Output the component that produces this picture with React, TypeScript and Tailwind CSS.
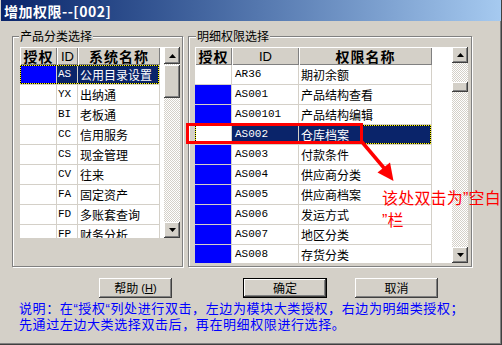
import React from "react";

const CJK = "font-['Noto_Sans_CJK_SC',sans-serif]";
const MONO = "font-['Liberation_Mono','DejaVu_Sans_Mono',monospace]";
const LAT = "font-['Liberation_Sans',sans-serif]";
const RAISED =
  "shadow-[inset_-1px_-1px_0_#404040,inset_1px_1px_0_#ffffff,inset_-2px_-2px_0_#808080]";

type Row = { id: string; name: string; auth: boolean; sel?: boolean };

const leftRows: Row[] = [
  { id: "AS", name: "公用目录设置", auth: true, sel: true },
  { id: "YX", name: "出纳通", auth: false },
  { id: "BI", name: "老板通", auth: false },
  { id: "CC", name: "信用服务", auth: false },
  { id: "CS", name: "现金管理", auth: false },
  { id: "CV", name: "往来", auth: false },
  { id: "FA", name: "固定资产", auth: false },
  { id: "FD", name: "多账套查询", auth: false },
  { id: "FP", name: "财务分析", auth: false },
];

const rightRows: Row[] = [
  { id: "AR36", name: "期初余额", auth: false },
  { id: "AS001", name: "产品结构查看", auth: true },
  { id: "AS00101", name: "产品结构编辑", auth: true },
  { id: "AS002", name: "仓库档案", auth: false, sel: true },
  { id: "AS003", name: "付款条件", auth: true },
  { id: "AS004", name: "供应商分类", auth: true },
  { id: "AS005", name: "供应商档案", auth: true },
  { id: "AS006", name: "发运方式", auth: true },
  { id: "AS007", name: "地区分类", auth: true },
  { id: "AS008", name: "存货分类", auth: true },
];

function Arrow({ up }: { up?: boolean }) {
  return (
    <svg width="7" height="4" viewBox="0 0 7 4">
      {up ? <polygon points="3.5,0 7,4 0,4" fill="#000" /> : <polygon points="0,0 7,0 3.5,4" fill="#000" />}
    </svg>
  );
}

function ScrollBar({ upH, thumbTop, thumbH }: { upH: string; thumbTop: string; thumbH: string }) {
  return (
    <div className="w-[16px] h-full flex flex-col [background:repeating-conic-gradient(#d4d0c8_0_25%,#ffffff_0_50%)_0_0/2px_2px]">
      <div className={`${upH} w-[16px] bg-[#d4d0c8] flex items-center justify-center ${RAISED}`}>
        <Arrow up />
      </div>
      <div className={thumbTop} />
      <div className={`${thumbH} w-[16px] bg-[#d4d0c8] ${RAISED}`} />
      <div className="flex-1" />
      <div className={`h-[16px] w-[16px] bg-[#d4d0c8] flex items-center justify-center ${RAISED}`}>
        <Arrow />
      </div>
    </div>
  );
}

function HeaderCell({ w, children, mono }: { w: string; children: React.ReactNode; mono?: boolean }) {
  return (
    <div
      className={`${w} h-[18px] bg-[#d4d0c8] flex items-center justify-center shadow-[inset_1px_1px_0_#ffffff,inset_-1px_-1px_0_#808080] ${
        mono ? `${LAT} text-[13px]` : `${CJK} text-[14px] font-bold tracking-[1px]`
      } leading-none text-black`}
    >
      {children}
    </div>
  );
}

function GridRow({ row, widths, idPad }: { row: Row; widths: [string, string, string]; idPad: string }) {
  const selBg = row.sel ? "bg-[#0a246a] text-white" : "bg-white text-black";
  return (
    <div className="flex h-[20px] shrink-0">
      <div className="relative flex">
        <div className={`${widths[0]} h-[20px] border-r border-b border-[#d4d0c8] ${row.auth ? "bg-[#0000ff]" : "bg-white"}`} />
        <div
          className={`${widths[1]} h-[20px] border-r border-b border-[#d4d0c8] ${selBg} ${MONO} text-[11px] ${idPad} flex items-center whitespace-nowrap overflow-hidden`}
        >
          {row.id}
        </div>
        <div
          className={`${widths[2]} h-[20px] border-r border-b border-[#d4d0c8] ${selBg} ${CJK} text-[12px] pl-[2px] flex items-center whitespace-nowrap overflow-hidden`}
        >
          {row.name}
        </div>
        {row.sel && (
          <>
            <div className="absolute left-0 right-[1px] top-0 bottom-[1px] border border-black" />
            <div className="absolute left-0 right-[1px] top-0 bottom-[1px] border border-dotted border-[#ffff00]" />
          </>
        )}
      </div>
    </div>
  );
}

function GroupBox({
  title,
  w,
  pad,
  legendLeft,
  children,
}: {
  title: string;
  w: string;
  pad: string;
  legendLeft: string;
  children: React.ReactNode;
}) {
  return (
    <div className={`relative ${w} h-[231px] border border-[#808080] shadow-[1px_1px_0_#ffffff,inset_1px_1px_0_#ffffff] ${pad}`}>
      <div className={`absolute top-[-8px] ${legendLeft} px-[1px] bg-[#d4d0c8] ${CJK} text-[12px] leading-[14px] text-black`}>
        {title}
      </div>
      {children}
    </div>
  );
}

function Button({ w, children, def }: { w: string; children: React.ReactNode; def?: boolean }) {
  if (def) {
    return (
      <div className={`${w} h-[20px] border border-black`}>
        <div className={`w-full h-full bg-[#d4d0c8] ${RAISED} flex items-center justify-center ${CJK} text-[12px] leading-none text-black`}>
          {children}
        </div>
      </div>
    );
  }
  return (
    <div
      className={`${w} h-[20px] bg-[#d4d0c8] ${RAISED} flex items-center justify-center ${CJK} text-[12px] leading-none text-black`}
    >
      {children}
    </div>
  );
}

export default function App() {
  return (
    <div className="relative w-[502px] h-[345px] bg-[#d4d0c8] flex flex-col overflow-hidden shadow-[inset_-1px_-1px_0_#404040,inset_-2px_-2px_0_#808080]">
      {/* title bar */}
      <div
        className={`h-[21px] mx-[1px] bg-gradient-to-r from-[#0a246a] to-[#a6caf0] flex items-center pl-[3px] text-white font-bold text-[14px] tracking-[0.5px] ${CJK} leading-none`}
      >
        增加权限--[002]
      </div>

      {/* group boxes */}
      <div className="flex mt-[15px] pl-[12px] gap-[5px]">
        <GroupBox title="产品分类选择" w="w-[171px]" pad="pl-[7px] pt-[10px]" legendLeft="left-[6px]">
          <div className="flex w-[160px] h-[191px]">
            <div className="w-[144px] h-full bg-white flex flex-col overflow-hidden">
              <div className="flex shrink-0">
                <HeaderCell w="w-[37px]">授权</HeaderCell>
                <HeaderCell w="w-[21px]" mono>
                  ID
                </HeaderCell>
                <HeaderCell w="w-[82px]">系统名称</HeaderCell>
              </div>
              {leftRows.map((r) => (
                <GridRow key={r.id} row={r} widths={["w-[37px]", "w-[21px]", "w-[82px]"]} idPad="pl-[1px]" />
              ))}
            </div>
            <ScrollBar upH="h-[17px]" thumbTop="h-[1px]" thumbH="h-[33px]" />
          </div>
        </GroupBox>

        <GroupBox title="明细权限选择" w="w-[284px]" pad="pl-[6px] pt-[10px]" legendLeft="left-[7px]">
          <div className="flex w-[273px] h-[216px]">
            <div className="w-[257px] h-full bg-white flex flex-col overflow-hidden">
              <div className="flex shrink-0">
                <HeaderCell w="w-[37px]">授权</HeaderCell>
                <HeaderCell w="w-[67px]" mono>
                  ID
                </HeaderCell>
                <HeaderCell w="w-[133px]">权限名称</HeaderCell>
              </div>
              {rightRows.map((r) => (
                <GridRow key={r.id} row={r} widths={["w-[37px]", "w-[67px]", "w-[133px]"]} idPad="pl-[3px]" />
              ))}
            </div>
            <ScrollBar upH="h-[16px]" thumbTop="h-[19px]" thumbH="h-[10px]" />
          </div>
        </GroupBox>
      </div>

      {/* buttons */}
      <div className="flex mt-[11px] pl-[99px]">
        <Button w="w-[73px]">
          帮助
          <span className={`${LAT} text-[11px] ml-[3px]`}>
            (<span className="underline">H</span>)
          </span>
        </Button>
        <div className="ml-[71px]">
          <Button w="w-[84px]" def>
            确定
          </Button>
        </div>
        <div className="ml-[28px]">
          <Button w="w-[83px]">取消</Button>
        </div>
      </div>

      {/* explanation */}
      <div className={`mt-[2px] pl-[19px] ${CJK} text-[13px] leading-[15px] tracking-[0.6px] text-[#0000ff]`}>
        <div className="whitespace-nowrap">
          说明：在<span className={LAT}>“</span>授权<span className={LAT}>“</span>列处进行双击，左边为模块大类授权，右边为明细类授权；
        </div>
        <div className="whitespace-nowrap">先通过左边大类选择双击后，再在明细权限进行选择。</div>
      </div>

      {/* annotation overlay */}
      <div className="absolute left-[186px] top-[123px] w-[177px] h-[21px] border-[3px] border-[#ff0000]" />
      <svg className="absolute left-0 top-0" width="502" height="345" viewBox="0 0 502 345">
        <line x1="362" y1="142" x2="384" y2="168" stroke="#ff0000" strokeWidth="3.5" />
        <polygon points="377.5,172.5 390,162.5 393.5,181" fill="#ff0000" />
      </svg>
      <div className={`absolute left-[382px] top-[187px] ${CJK} text-[16px] leading-[20px] tracking-[0.2px] text-[#ff0000] whitespace-nowrap`}>
        <div>
          该处双击为<span className={LAT}>”</span>空白
        </div>
        <div>
          <span className={LAT}>”</span>栏
        </div>
      </div>
    </div>
  );
}
